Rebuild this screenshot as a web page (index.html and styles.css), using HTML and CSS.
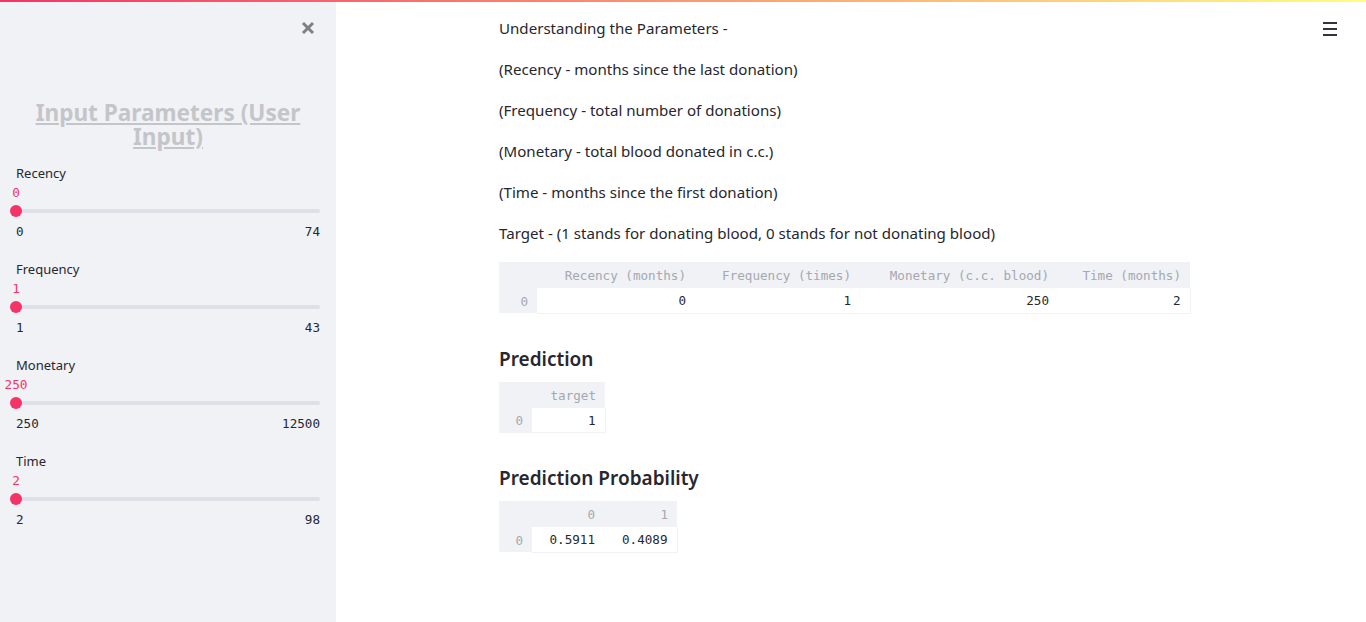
FILE: index.html
```html
<!DOCTYPE html>
<html>
<head>
<meta charset="utf-8">
<link rel="stylesheet" href="styles.css">
</head>
<body>
<div class="app">
  <div class="decoration"></div>
  <div class="row">
    <aside class="sidebar">
      <div class="close-row">
        <svg class="close" width="14" height="14" viewBox="0 0 14 14" aria-label="close"><path d="M2 2 L12 12 M12 2 L2 12" stroke="#7f8086" stroke-width="3" stroke-linecap="butt"/></svg>
      </div>
      <h1 class="side-title"><a>Input Parameters (User Input)</a></h1>
      <div class="slider">
        <div class="s-label">Recency</div>
        <div class="s-value"><span>0</span></div>
        <div class="s-track"><span class="thumb"></span></div>
        <div class="s-minmax"><span>0</span><span>74</span></div>
      </div>
      <div class="slider">
        <div class="s-label">Frequency</div>
        <div class="s-value"><span>1</span></div>
        <div class="s-track"><span class="thumb"></span></div>
        <div class="s-minmax"><span>1</span><span>43</span></div>
      </div>
      <div class="slider">
        <div class="s-label">Monetary</div>
        <div class="s-value"><span>250</span></div>
        <div class="s-track"><span class="thumb"></span></div>
        <div class="s-minmax"><span>250</span><span>12500</span></div>
      </div>
      <div class="slider">
        <div class="s-label">Time</div>
        <div class="s-value"><span>2</span></div>
        <div class="s-track"><span class="thumb"></span></div>
        <div class="s-minmax"><span>2</span><span>98</span></div>
      </div>
    </aside>
    <main class="main">
      <button class="menu" aria-label="menu"><span></span><span></span><span></span></button>
      <div class="content">
        <p>Understanding the Parameters -</p>
        <p>(Recency - months since the last donation)</p>
        <p>(Frequency - total number of donations)</p>
        <p>(Monetary - total blood donated in c.c.)</p>
        <p>(Time - months since the first donation)</p>
        <p>Target - (1 stands for donating blood, 0 stands for not donating blood)</p>

        <table class="df t1">
          <colgroup><col class="c-idx"><col class="c-a"><col class="c-b"><col class="c-c"><col class="c-d"></colgroup>
          <thead><tr><th class="idx"></th><th>Recency (months)</th><th>Frequency (times)</th><th>Monetary (c.c. blood)</th><th>Time (months)</th></tr></thead>
          <tbody><tr><th class="idx">0</th><td>0</td><td>1</td><td>250</td><td>2</td></tr></tbody>
        </table>

        <h2>Prediction</h2>
        <table class="df t2">
          <colgroup><col class="c-idx2"><col class="c-e"></colgroup>
          <thead><tr><th class="idx"></th><th>target</th></tr></thead>
          <tbody><tr><th class="idx">0</th><td>1</td></tr></tbody>
        </table>

        <h2>Prediction Probability</h2>
        <table class="df t3">
          <colgroup><col class="c-idx2"><col class="c-f"><col class="c-g"></colgroup>
          <thead><tr><th class="idx"></th><th>0</th><th>1</th></tr></thead>
          <tbody><tr><th class="idx">0</th><td>0.5911</td><td>0.4089</td></tr></tbody>
        </table>
      </div>
    </main>
  </div>
</div>
</body>
</html>
```
FILE: styles.css
```css
* { box-sizing: border-box; }
html, body { margin: 0; padding: 0; }
body {
  font-family: "Noto Sans", "Open Sans", sans-serif;
  color: #262730;
  background: #fff;
  overflow: hidden;
}
.app { width: 1366px; height: 622px; display: flex; flex-direction: column; }
.decoration {
  height: 2px;
  flex: none;
  background: linear-gradient(90deg, #f63366, #fffd80);
}
.row { flex: 1; display: flex; min-height: 0; }

/* Sidebar */
.sidebar {
  width: 336px;
  flex: none;
  background: #f0f2f6;
  padding: 0 16px;
}
.close-row {
  height: 52px;
  display: flex;
  align-items: center;
  justify-content: flex-end;
  padding-right: 5px;
}
.close { display: block; }
.side-title {
  margin: 47px 0 14px;
  text-align: center;
  font-size: 22.6px;
  line-height: 24px;
  font-weight: 700;
  color: #c4c5c9;
}
.side-title a {
  text-decoration: underline;
  text-underline-offset: 2px;
  text-decoration-thickness: 2px;
}
.slider { margin-bottom: 18px; }
.s-label {
  height: 20px;
  line-height: 20px;
  font-size: 13px;
  color: #262730;
}
.s-value {
  height: 18px;
  line-height: 20px;
  position: relative;
  font-family: "DejaVu Sans Mono", monospace;
  font-size: 12.8px;
  color: #f63366;
}
.s-value span {
  display: inline-block;
  transform: translateX(-50%);
}
.s-track {
  height: 20px;
  display: flex;
  align-items: center;
  position: relative;
}
.s-track::before {
  content: "";
  display: block;
  width: 100%;
  height: 4px;
  background: #dde0e6;
  border-radius: 2px;
}
.thumb {
  position: absolute;
  left: -6px;
  top: 4px;
  width: 12px;
  height: 12px;
  border-radius: 50%;
  background: #f63366;
}
.s-minmax {
  height: 20px;
  line-height: 22px;
  display: flex;
  justify-content: space-between;
  font-family: "DejaVu Sans Mono", monospace;
  font-size: 12.6px;
  color: #262730;
}

/* Main */
.main {
  flex: 1;
  position: relative;
  display: flex;
  justify-content: center;
}
.menu {
  position: absolute;
  top: 20px;
  right: 29px;
  width: 14px;
  height: 14px;
  padding: 0;
  border: 0;
  background: none;
  display: flex;
  flex-direction: column;
  justify-content: space-between;
}
.menu span { display: block; height: 2px; background: #31333f; }
.content {
  width: 704px;
  padding-top: 14px;
}
.content p {
  margin: 0 0 16px;
  font-size: 15.1px;
  line-height: 25px;
}
.content h2 {
  margin: 30px 0 8px;
  font-size: 19px;
  line-height: 30px;
  font-weight: 600;
  color: #262730;
}
.df {
  border-collapse: collapse;
  table-layout: fixed;
  font-family: "DejaVu Sans Mono", monospace;
  font-size: 12.6px;
}
.t1 { margin-top: 16px; width: 691px; }
.t2 { width: 106px; }
.t3 { width: 178px; }
.c-idx { width: 38px; }
.c-a { width: 158px; }
.c-b { width: 165px; }
.c-c { width: 198px; }
.c-d { width: 132px; }
.c-idx2 { width: 33px; }
.c-e { width: 73px; }
.c-f { width: 72px; }
.c-g { width: 73px; }
.df th, .df td {
  text-align: right;
  padding: 1px 9px 0 0;
  white-space: nowrap;
  overflow: hidden;
}
.df thead th {
  height: 26px;
  background: #f0f2f6;
  color: #a5a8b0;
  font-weight: normal;
}
.df tbody th, .df tbody td { height: 25px; }
.df tbody th.idx {
  background: #f0f2f6;
  color: #a5a8b0;
  font-weight: normal;
}
.df tbody td {
  color: #262730;
  border-bottom: 1px solid #f0f2f6;
}
.df tbody td:last-child { border-right: 1px solid #f0f2f6; }
```
